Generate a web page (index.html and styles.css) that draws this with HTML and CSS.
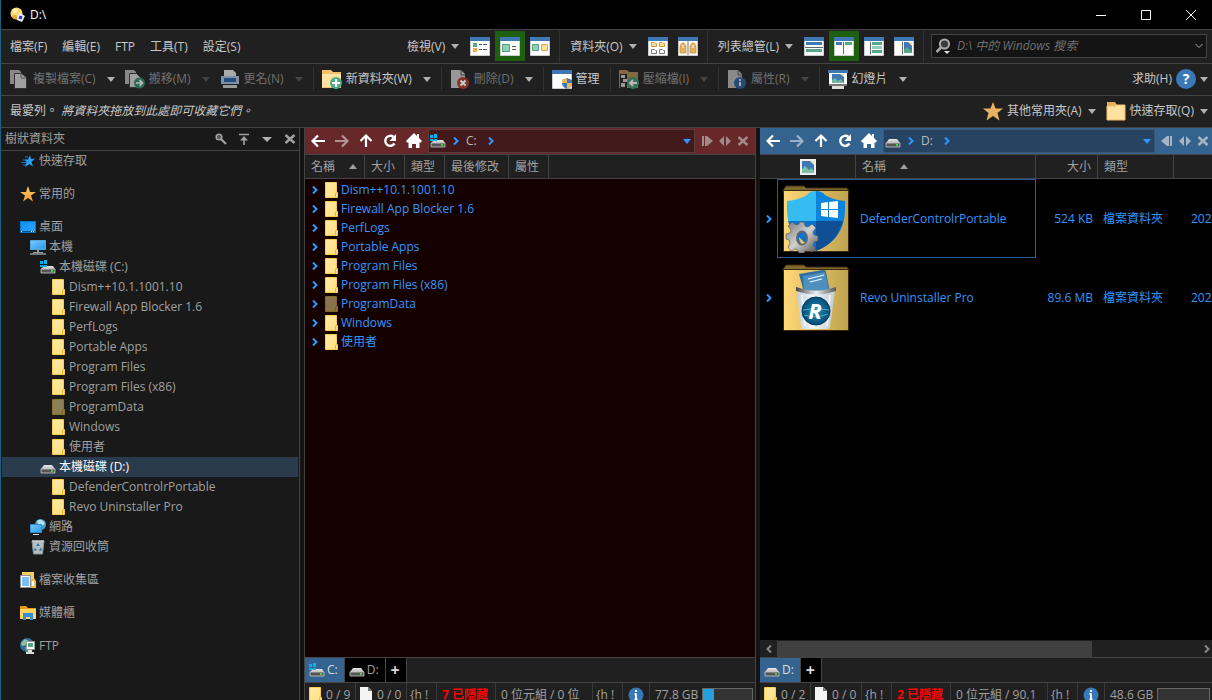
FILE: index.html
```html
<!DOCTYPE html>
<html lang="zh-Hant">
<head>
    <meta charset="UTF-8">
    <meta name="viewport" content="width=device-width, initial-scale=1.0">
    <title>D:\</title>
    <link rel="stylesheet" href="styles.css">
</head>
<body>
<!-- Icon library -->
<svg class="sprite" aria-hidden="true">
    <defs>
        <linearGradient id="g-folder" x1="0" y1="0" x2="1" y2="1"><stop offset="0" stop-color="#ffe9a6"/><stop offset="1" stop-color="#ffdf7c"/></linearGradient>
        <linearGradient id="g-thumb" x1="0" y1="0" x2="1" y2="0"><stop offset="0" stop-color="#ffd877"/><stop offset="1" stop-color="#bfa350"/></linearGradient>
        <linearGradient id="g-screen" x1="0" y1="0" x2="1" y2="1"><stop offset="0" stop-color="#7cc8ff"/><stop offset="1" stop-color="#259be8"/></linearGradient>
        <linearGradient id="g-desk" x1="0" y1="0" x2="1" y2="1"><stop offset="0" stop-color="#0a8cf0"/><stop offset="1" stop-color="#2ea8ff"/></linearGradient>
        <linearGradient id="g-star" x1="0" y1="0" x2="0" y2="1"><stop offset="0" stop-color="#ffd060"/><stop offset="1" stop-color="#f39a3c"/></linearGradient>
        <linearGradient id="g-drive" x1="0" y1="0" x2="0" y2="1"><stop offset="0" stop-color="#e8e8e8"/><stop offset="1" stop-color="#b8b8b8"/></linearGradient>
        <linearGradient id="g-gear" x1="0" y1="0" x2="1" y2="1"><stop offset="0" stop-color="#7a7a7a"/><stop offset=".5" stop-color="#d0d0d0"/><stop offset="1" stop-color="#4d4d4d"/></linearGradient>
        <linearGradient id="g-bin" x1="0" y1="0" x2="1" y2="0"><stop offset="0" stop-color="#bccddb"/><stop offset=".4" stop-color="#f2f6f9"/><stop offset="1" stop-color="#c3ccd3"/></linearGradient>
        <linearGradient id="g-rim" x1="0" y1="0" x2="1" y2="0"><stop offset="0" stop-color="#444"/><stop offset=".5" stop-color="#eee"/><stop offset="1" stop-color="#555"/></linearGradient>
        <radialGradient id="g-revo"><stop offset="0" stop-color="#1f97bd"/><stop offset="1" stop-color="#064a74"/></radialGradient>

        <symbol id="i-app" viewBox="0 0 16 16"><circle cx="6.5" cy="6.5" r="6" fill="#ffd868"/><path d="M1 9a6 6 0 0 0 7 3l-2-4z" fill="#e9a53c"/><circle cx="5" cy="4" r="2.4" fill="#fff1b0"/><path d="M10 6l5 3-3 6-5-2 1-5z" fill="#e9ecff"/><path d="M9.500 8.500l3 1-1 3-3-1z" fill="#3036a0"/></symbol>
        <symbol id="i-folder" viewBox="0 0 16 16"><path d="M2.500 .5h11v10h1v5h-12z" fill="url(#g-folder)" stroke="#f5cd50"/><path d="M12.500 15v-4l1-.5" fill="none" stroke="#e8b730"/></symbol>
        <symbol id="i-folder-big" viewBox="0 0 20 20"><path d="M1 1h8l2 3h8v4H1z" fill="#e2ae59"/><path d="M1 5h8l1-1h9v15H1z" fill="#ffe2a0" stroke="#eebf6c"/></symbol>
        <symbol id="i-page" viewBox="0 0 16 16"><path d="M2 0h8l4 4v12H2z" fill="#f4f4f4"/><path d="M10 0v4h4z" fill="#777"/></symbol>
        <symbol id="i-drive" viewBox="0 0 16 16"><path d="M4 6h8l3 4H1z" fill="url(#g-drive)"/><path d="M1 10h14v4H1z" fill="#555" stroke="#ccc" stroke-width=".8"/><path d="M11 12h2" stroke="#3cff3c" stroke-width="1.500"/></symbol>
        <symbol id="i-windrive" viewBox="0 0 16 16"><path d="M4 7h9l2 3H1z" fill="url(#g-drive)"/><path d="M1 10h14v4H1z" fill="#555" stroke="#ccc" stroke-width=".8"/><path d="M11 12h2" stroke="#3cff3c" stroke-width="1.500"/><path d="M0 2h3v3H0zM4 1h3v4H4zM0 6h3v2H0zM4 6h3v2H4z" fill="#00b4f0"/></symbol>
        <symbol id="i-quick" viewBox="0 0 16 16"><path d="M10 2l1 4 4-.5-3.500 3.500 1.500 4.500L9.500 11 5 14l1.500-4.500L4.500 6.500H8z" fill="#28a0f8"/><path d="M5 4h3M3 7h3M1 9.500h5M3 12h3" stroke="#1673c4"/></symbol>
        <symbol id="i-star" viewBox="0 0 16 16"><path d="M8 0l2 6h6l-5 3.500 2 6-5-3.500-5 3.500 2-6L0 6h6z" fill="url(#g-star)"/></symbol>
        <symbol id="i-desktop" viewBox="0 0 16 16"><path d="M.5 2.500h15v11H.5z" fill="url(#g-desk)" stroke="#0878c8"/><path d="M1 12.500h14" stroke="#064f88"/><path d="M1 12.500h1M11 12.500h1M13 12.500h1" stroke="#fff"/></symbol>
        <symbol id="i-pc" viewBox="0 0 16 16"><path d="M.5 1.500h15v9H.5z" fill="url(#g-screen)" stroke="#58a9dc"/><path d="M7 11h2v2h4v1H3v-1h4z" fill="#8ba0ad"/><path d="M0 15h16" stroke="#ccd6dc"/></symbol>
        <symbol id="i-net" viewBox="0 0 16 16"><circle cx="10.500" cy="5.500" r="5.500" fill="#4a9cc4"/><path d="M7 2c3-3 7 0 8 3l-4 2-3-2z" fill="#b9e0ef"/><path d="M.5 5.500h11v8H.5z" fill="url(#g-screen)" stroke="#318fd0"/><path d="M3 15.500h6" stroke="#dce6ec"/></symbol>
        <symbol id="i-bin" viewBox="0 0 16 16"><path d="M2 2h12l-1.500 13h-9z" fill="#b9bdc0" stroke="#8b9195"/><path d="M2 2h12" stroke="#f3f3f3"/><path d="M8 4l2 3H6zM5 8.500l2 3H4zM11 8.500l1 3H8.500z" fill="#1b78bd"/></symbol>
        <symbol id="i-collect" viewBox="0 0 16 16"><path d="M2 0h12v14H2z" fill="#f8cd61"/><path d="M.5 3.500h10v12H.5z" fill="#fff" stroke="#8e9499"/><path d="M2 5h7v9H2z" fill="#7cc0f8"/><path d="M11 8l3-2 2 3v7h-5z" fill="#f3b940"/><path d="M13 9v5" stroke="#fff" stroke-width="2"/></symbol>
        <symbol id="i-library" viewBox="0 0 16 16"><path d="M0 1h6l2 2h8v11H0z" fill="#e69a12"/><path d="M0 4h16v10H0z" fill="#ffd463"/><path d="M3 15V8h10v7h-3v-3H6v3z" fill="#3590d8"/></symbol>
        <symbol id="i-ftp" viewBox="0 0 16 16"><circle cx="7" cy="7" r="7" fill="#2d6b9d"/><path d="M1 5l4-4 4 2-3 4-4 1zM5 9l3 2-1 3z" fill="#8bc29c"/><path d="M6.500 3.500h8v8h-8z" fill="#fff" stroke="#9a9a9a"/><path d="M8 5h5v4H8z" fill="#54a583"/><path d="M8 12h4v2h2v2H6v-2h2z" fill="#ddd"/></symbol>

        <symbol id="i-search" viewBox="0 0 12 12"><circle cx="4" cy="4" r="2.800" fill="#555" stroke="currentColor" stroke-width="1.600"/><path d="M6 6l5 5" stroke="currentColor" stroke-width="2.200"/></symbol>
        <symbol id="i-find" viewBox="0 0 16 16"><circle cx="9.500" cy="6" r="4.600" fill="#3c3c3c" stroke="#aaa" stroke-width="2"/><path d="M6 9.500L1.500 14" stroke="#aaa" stroke-width="2.500"/><path d="M9 13h6l-3 3z" fill="#ddd"/></symbol>
        <symbol id="i-top" viewBox="0 0 12 12"><path d="M1 1.500h10M6 12V5" stroke="currentColor" stroke-width="1.600"/><path d="M2 7.500L6 3l4 4.500z" fill="currentColor"/></symbol>
        <symbol id="i-close" viewBox="0 0 12 12"><path d="M1.500 2l9 8M10.500 2l-9 8" stroke="currentColor" stroke-width="2.500"/></symbol>
        <symbol id="i-chev" viewBox="0 0 8 8"><path d="M2 .5L5.500 4 2 7.500" fill="none" stroke="currentColor" stroke-width="2"/></symbol>
        <symbol id="i-back" viewBox="0 0 16 16"><path d="M15 8H3M8 2.500L2.500 8 8 13.500" fill="none" stroke="currentColor" stroke-width="2.200"/></symbol>
        <symbol id="i-forward" viewBox="0 0 16 16"><path d="M1 8h12M8 2.500L13.500 8 8 13.500" fill="none" stroke="currentColor" stroke-width="2.200"/></symbol>
        <symbol id="i-up" viewBox="0 0 16 16"><path d="M8 14V3M2.500 8L8 2.500 13.500 8" fill="none" stroke="currentColor" stroke-width="2.200"/></symbol>
        <symbol id="i-refresh" viewBox="0 0 16 16"><path d="M12.500 10.500A5 5 0 1 1 11.500 4" fill="none" stroke="currentColor" stroke-width="2.400"/><path d="M14 1v7H7.500z" fill="currentColor"/></symbol>
        <symbol id="i-home" viewBox="0 0 16 16"><path d="M8 0l3 3V1h2v4l3 3-1 1.500h-1.500V15H10v-4H6v4H2.500V9.500H1L0 8z" fill="currentColor"/></symbol>
        <symbol id="i-split-r" viewBox="0 0 12 12"><path d="M1 1h2v10H1zM4 1h2v10H4zM6 1l6 5-6 5z" fill="currentColor"/></symbol>
        <symbol id="i-split-l" viewBox="0 0 12 12"><path d="M11 1H9v10h2zM8 1H6v10h2zM6 1L0 6l6 5z" fill="currentColor"/></symbol>
        <symbol id="i-swap" viewBox="0 0 12 12"><path d="M5 1v10L0 6zM7 1l5 5-5 5z" fill="currentColor"/></symbol>

        <symbol id="w-frame" viewBox="0 0 20 20"><path d="M.5 1.500h19v18H.5z" fill="#fff" stroke="#ccc"/><path d="M0 1h20v4H0z" fill="#3f78b5"/></symbol>
        <symbol id="v-details" viewBox="0 0 20 20"><use href="#w-frame"/><path d="M3 7h4v4H3z" fill="#55a986"/><path d="M3 12h4v4H3z" fill="#e7b04e"/><path d="M9 8.500h3m1 0h4M9 13.500h3m1 0h4" stroke="#555"/></symbol>
        <symbol id="v-tiles" viewBox="0 0 20 20"><use href="#w-frame"/><path d="M2.500 8.500h7v7h-7z" fill="#93ceb5" stroke="#4da37f"/><path d="M12 10.500h4M12 13.500h4" stroke="#555"/></symbol>
        <symbol id="v-thumbs" viewBox="0 0 20 20"><use href="#w-frame"/><path d="M2.500 8.500h6v6h-6z" fill="#93ceb5" stroke="#4da37f"/><path d="M11.500 8.500h6v6h-6z" fill="#ffe09a" stroke="#e0a94c"/></symbol>
        <symbol id="v-folders" viewBox="0 0 20 20"><use href="#w-frame"/><path d="M3.500 6.500h3l1 1h1v3h-5zM11.500 6.500h3l1 1h1v3h-5z" fill="#ffe0a0" stroke="#d99a35"/><path d="M3.500 13.500h3l1 1h1v3h-5zM11.500 13.500h3l1 1h1v3h-5z" fill="#fff" stroke="#777"/></symbol>
        <symbol id="v-lock" viewBox="0 0 20 20"><use href="#w-frame"/><path d="M10 5v14" stroke="#777"/><path d="M2 17v-7l2-3h2l2 3v7zM12 17v-7l2-3h2l2 3v7z" fill="#e5b35f" stroke="#c78e38" stroke-width=".7"/><path d="M5 9v3M15 9v3" stroke="#fff"/></symbol>
        <symbol id="v-rows" viewBox="0 0 20 20"><use href="#w-frame"/><path d="M2 6h16v3H2z" fill="#3f78b5"/><path d="M1 11.500h18" stroke="#666"/><path d="M2 13h16v3H2z" fill="#55a986"/></symbol>
        <symbol id="v-cols" viewBox="0 0 20 20"><use href="#w-frame"/><path d="M9.500 6v12" stroke="#666"/><path d="M2 6h6v3H2z" fill="#3f78b5"/><path d="M11 6h7v3h-7z" fill="#55a986"/></symbol>
        <symbol id="v-tree" viewBox="0 0 20 20"><use href="#w-frame"/><path d="M6.500 6v12" stroke="#666"/><path d="M8 6h10v3H8zM8 14h10v3H8z" fill="#55a986"/><path d="M8 10h10v3H8z" fill="#93ceb5"/></symbol>
        <symbol id="v-preview" viewBox="0 0 20 20"><use href="#w-frame"/><path d="M8.500 6v12" stroke="#666"/><path d="M10 6h8v11h-8z" fill="#3f78b5"/><path d="M14 6h4v4z" fill="#ffe09a"/><path d="M10 17v-3l3-3 5 4v2z" fill="#55a986"/></symbol>

        <symbol id="t-copy" viewBox="0 0 20 20"><path d="M1 1h9l2 2v12H1z" fill="#888"/><path d="M5.500 4.500h7l5 4v11h-12z" fill="#a0a0a0" stroke="#333"/><path d="M12 4v5h5" fill="none" stroke="#555"/></symbol>
        <symbol id="t-move" viewBox="0 0 20 20"><path d="M0 1h9l2 2v12H0z" fill="#888"/><path d="M4.500 4.500h7l4 4v10h-11z" fill="#a0a0a0" stroke="#333"/><circle cx="14.500" cy="14" r="5.500" fill="#2f6b54"/><path d="M11 14h6M14.500 11l3 3-3 3" fill="none" stroke="#bbb" stroke-width="1.600"/></symbol>
        <symbol id="t-rename" viewBox="0 0 20 20"><path d="M4 1h9l3 3v4H4z" fill="#aaa"/><path d="M1 7h18v8H1z" fill="#7d90a5"/><path d="M4 9h12v4H4z" fill="#224d7d"/><path d="M3 16h14v3H3z" fill="#999"/></symbol>
        <symbol id="t-new" viewBox="0 0 20 20"><path d="M0 1h9l2 2h8v16H0z" fill="#f3c16c"/><path d="M0 5h19v13H0z" fill="#ffe2a4"/><circle cx="14" cy="14" r="6" fill="#4cac86"/><path d="M14 10v8M10 14h8" stroke="#fff" stroke-width="2"/></symbol>
        <symbol id="t-delete" viewBox="0 0 20 20"><path d="M1 1h10l4 4v14H1z" fill="#989898"/><path d="M11 1v5h4" fill="none" stroke="#444"/><circle cx="13" cy="14" r="6" fill="#843329"/><path d="M10.500 11.500l5 5m0-5l-5 5" stroke="#ccc" stroke-width="2"/></symbol>
        <symbol id="t-admin" viewBox="0 0 20 20"><use href="#w-frame"/><path d="M15 9l5 2v3q0 4-5 6-5-2-5-6v-3z" fill="#3f78b5"/><path d="M15 9v5h-5v-3zM15 14h5q0 4-5 6z" fill="#e9b65e"/></symbol>
        <symbol id="t-archive" viewBox="0 0 20 20"><path d="M0 1h8l2 2h9v16H0z" fill="#806a42"/><path d="M1 5h7v14H1z" fill="#1f1f1f"/><path d="M2 6h4v3H2zM4 10h4v3H4zM2 14h4v4H2z" fill="#999"/><circle cx="14" cy="14" r="6" fill="#367258"/><path d="M18 14h-7M14 11l-3 3 3 3" fill="none" stroke="#bbb" stroke-width="1.800"/></symbol>
        <symbol id="t-props" viewBox="0 0 20 20"><path d="M1 1h10l4 4v14H1z" fill="#8a8a8a"/><path d="M11 1v5h4" fill="none" stroke="#444"/><circle cx="13" cy="14" r="6" fill="#264b74"/><path d="M13 10v2M13 13v4" stroke="#aaa" stroke-width="2"/></symbol>
        <symbol id="t-slides" viewBox="0 0 20 20"><path d="M0 1h20v3H0z" fill="#3f78b5"/><path d="M1 4h18v11H1z" fill="#fff"/><path d="M4 5h12v9H4z" fill="#3f78b5"/><path d="M12 5h4v3z" fill="#ffe09a"/><path d="M4 14v-3l3-2 3 3 3-2 3 4z" fill="#72b99c"/><path d="M1 15h18v2H1z" fill="#777"/><path d="M4 17h12v3H4z" fill="#ddd"/></symbol>
        <symbol id="t-image" viewBox="0 0 16 16"><path d="M1 1h14v14H1z" fill="#3f78b5" stroke="#eee" stroke-width="2"/><path d="M10 2h4v4z" fill="#ffe09a"/><path d="M2 14v-4l3-3 4 4 2-2 3 3v2z" fill="#80c1a5"/></symbol>
        <symbol id="t-star" viewBox="0 0 20 20"><path d="M10 1l2.600 6.500H20l-5.500 4.500 2 7.500L10 15l-6.500 4.500 2-7.500L0 7.500h7.400z" fill="#e9b261"/></symbol>
        <symbol id="t-info" viewBox="0 0 16 16"><circle cx="8" cy="8" r="7.500" fill="#3878b8"/><path d="M8 3v2M8 6.500v6M6.500 12.500h3M6.500 7H8" stroke="#fff" stroke-width="1.800"/></symbol>
    </defs>
</svg>

<div class="app">
    <header class="titlebar">
        <svg class="ic16"><use href="#i-app"/></svg>
        <h1>D:\</h1>
        <div class="window-buttons">
            <button aria-label="最小化"><svg viewBox="0 0 12 12"><path d="M1 6.500h10"/></svg></button>
            <button aria-label="最大化"><svg viewBox="0 0 12 12"><path d="M1.500 1.500h9v9h-9z"/></svg></button>
            <button aria-label="關閉"><svg viewBox="0 0 12 12"><path d="M1 1l10 10M11 1L1 11"/></svg></button>
        </div>
    </header>

    <div class="bar menubar">
        <nav class="menus">
            <button>檔案(F)</button>
            <button>編輯(E)</button>
            <button>FTP</button>
            <button>工具(T)</button>
            <button>設定(S)</button>
        </nav>
        <div class="group">
            <button class="drop">檢視(V)<i class="caret"></i></button>
            <button class="view" aria-label="詳細資料"><svg class="ic20"><use href="#v-details"/></svg></button>
            <button class="view on" aria-label="並排"><svg class="ic20"><use href="#v-tiles"/></svg></button>
            <button class="view" aria-label="縮圖"><svg class="ic20"><use href="#v-thumbs"/></svg></button>
        </div>
        <div class="group">
            <button class="drop">資料夾(O)<i class="caret"></i></button>
            <button class="view" aria-label="資料夾格式"><svg class="ic20"><use href="#v-folders"/></svg></button>
            <button class="view" aria-label="格式鎖定"><svg class="ic20"><use href="#v-lock"/></svg></button>
        </div>
        <div class="group">
            <button class="drop">列表總管(L)<i class="caret"></i></button>
            <button class="view" aria-label="上下雙欄"><svg class="ic20"><use href="#v-rows"/></svg></button>
            <button class="view on" aria-label="左右雙欄"><svg class="ic20"><use href="#v-cols"/></svg></button>
            <button class="view" aria-label="樹狀"><svg class="ic20"><use href="#v-tree"/></svg></button>
            <button class="view" aria-label="預覽"><svg class="ic20"><use href="#v-preview"/></svg></button>
        </div>
        <div class="search">
            <svg class="ic16"><use href="#i-find"/></svg>
            <input type="text" aria-label="搜索" placeholder="D:\ 中的 Windows 搜索">
            <button aria-label="搜索選項"><svg viewBox="0 0 8 8"><path d="M.5 2L4 5.500 7.500 2"/></svg></button>
        </div>
    </div>

    <div class="bar toolbar">
        <div class="tools">
            <button class="tool" disabled><svg class="ic20"><use href="#t-copy"/></svg>複製檔案(C)<i class="caret lit"></i></button>
            <button class="tool" disabled><svg class="ic20"><use href="#t-move"/></svg>搬移(M)<i class="caret"></i></button>
            <button class="tool" disabled><svg class="ic20"><use href="#t-rename"/></svg>更名(N)<i class="caret"></i></button>
            <button class="tool split"><svg class="ic20"><use href="#t-new"/></svg>新資料夾(W)<i class="caret"></i></button>
            <button class="tool split" disabled><svg class="ic20"><use href="#t-delete"/></svg>刪除(D)<i class="caret lit"></i></button>
            <button class="tool split"><svg class="ic20"><use href="#t-admin"/></svg>管理</button>
            <button class="tool split" disabled><svg class="ic20"><use href="#t-archive"/></svg>壓縮檔(I)<i class="caret"></i></button>
            <button class="tool split" disabled><svg class="ic20"><use href="#t-props"/></svg>屬性(R)<i class="caret"></i></button>
            <button class="tool split"><svg class="ic20"><use href="#t-slides"/></svg>幻燈片<i class="caret"></i></button>
        </div>
        <button class="help">求助(H)<span class="question">?</span><i class="caret"></i></button>
    </div>

    <div class="bar favbar">
        <p>最愛列。 <em>將資料夾拖放到此處即可收藏它們。</em></p>
        <button class="fav"><svg class="ic20"><use href="#t-star"/></svg>其他常用夾(A)<i class="caret"></i></button>
        <button class="fav"><svg class="ic20"><use href="#i-folder-big"/></svg>快速存取(Q)<i class="caret"></i></button>
    </div>

    <main class="panes">
        <aside class="tree">
            <div class="tree-head">
                <h2>樹狀資料夾</h2>
                <button aria-label="尋找"><svg class="ic12"><use href="#i-search"/></svg></button>
                <button aria-label="到頂端"><svg class="ic12"><use href="#i-top"/></svg></button>
                <button aria-label="選單"><i class="caret big"></i></button>
                <button aria-label="關閉樹狀"><svg class="ic12"><use href="#i-close"/></svg></button>
            </div>
            <ul>
                <li><a href="#"><svg class="ic16"><use href="#i-quick"/></svg>快速存取</a></li>
                <li class="root"><a href="#"><svg class="ic16"><use href="#i-star"/></svg>常用的</a></li>
                <li class="root"><a href="#"><svg class="ic16"><use href="#i-desktop"/></svg>桌面</a></li>
                <li><a class="l1" href="#"><svg class="ic16"><use href="#i-pc"/></svg>本機</a></li>
                <li><a class="l2" href="#"><svg class="ic16"><use href="#i-windrive"/></svg>本機磁碟 (C:)</a></li>
                <li><a class="l3" href="#"><svg class="ic16"><use href="#i-folder"/></svg>Dism++10.1.1001.10</a></li>
                <li><a class="l3" href="#"><svg class="ic16"><use href="#i-folder"/></svg>Firewall App Blocker 1.6</a></li>
                <li><a class="l3" href="#"><svg class="ic16"><use href="#i-folder"/></svg>PerfLogs</a></li>
                <li><a class="l3" href="#"><svg class="ic16"><use href="#i-folder"/></svg>Portable Apps</a></li>
                <li><a class="l3" href="#"><svg class="ic16"><use href="#i-folder"/></svg>Program Files</a></li>
                <li><a class="l3" href="#"><svg class="ic16"><use href="#i-folder"/></svg>Program Files (x86)</a></li>
                <li><a class="l3" href="#"><svg class="ic16 hidden-item"><use href="#i-folder"/></svg>ProgramData</a></li>
                <li><a class="l3" href="#"><svg class="ic16"><use href="#i-folder"/></svg>Windows</a></li>
                <li><a class="l3" href="#"><svg class="ic16"><use href="#i-folder"/></svg>使用者</a></li>
                <li><a class="l2 selected" href="#"><svg class="ic16"><use href="#i-drive"/></svg>本機磁碟 (D:)</a></li>
                <li><a class="l3" href="#"><svg class="ic16"><use href="#i-folder"/></svg>DefenderControlrPortable</a></li>
                <li><a class="l3" href="#"><svg class="ic16"><use href="#i-folder"/></svg>Revo Uninstaller Pro</a></li>
                <li><a class="l1" href="#"><svg class="ic16"><use href="#i-net"/></svg>網路</a></li>
                <li><a class="l1" href="#"><svg class="ic16"><use href="#i-bin"/></svg>資源回收筒</a></li>
                <li class="root"><a href="#"><svg class="ic16"><use href="#i-collect"/></svg>檔案收集區</a></li>
                <li class="root"><a href="#"><svg class="ic16"><use href="#i-library"/></svg>媒體櫃</a></li>
                <li class="root"><a href="#"><svg class="ic16"><use href="#i-ftp"/></svg>FTP</a></li>
            </ul>
        </aside>

        <section class="lister left">
            <div class="nav">
                <button aria-label="上一頁"><svg class="ic16"><use href="#i-back"/></svg></button>
                <button class="off" aria-label="下一頁"><svg class="ic16"><use href="#i-forward"/></svg></button>
                <button aria-label="上層"><svg class="ic16"><use href="#i-up"/></svg></button>
                <button aria-label="重新整理"><svg class="ic16"><use href="#i-refresh"/></svg></button>
                <button aria-label="首頁"><svg class="ic16"><use href="#i-home"/></svg></button>
                <div class="address">
                    <svg class="ic16"><use href="#i-windrive"/></svg>
                    <svg class="chev"><use href="#i-chev"/></svg>
                    <a href="#">C:</a>
                    <svg class="chev"><use href="#i-chev"/></svg>
                    <button aria-label="路徑記錄"><i class="caret"></i></button>
                </div>
                <div class="nav-end">
                    <button aria-label="分割"><svg class="ic12"><use href="#i-split-r"/></svg></button>
                    <button aria-label="交換"><svg class="ic12"><use href="#i-swap"/></svg></button>
                    <button aria-label="關閉列表"><svg class="ic12"><use href="#i-close"/></svg></button>
                </div>
            </div>
            <div class="files">
                <table class="list">
                    <colgroup><col class="c-name"><col class="c-40"><col class="c-40"><col class="c-mod"><col class="c-40"><col></colgroup>
                    <thead>
                    <tr><th>名稱<i class="sort"></i></th><th>大小</th><th>類型</th><th>最後修改</th><th>屬性</th><th></th></tr>
                    </thead>
                    <tbody>
                    <tr><td colspan="6"><div class="file"><svg class="chev"><use href="#i-chev"/></svg><svg class="ic16"><use href="#i-folder"/></svg>Dism++10.1.1001.10</div></td></tr>
                    <tr><td colspan="6"><div class="file"><svg class="chev"><use href="#i-chev"/></svg><svg class="ic16"><use href="#i-folder"/></svg>Firewall App Blocker 1.6</div></td></tr>
                    <tr><td colspan="6"><div class="file"><svg class="chev"><use href="#i-chev"/></svg><svg class="ic16"><use href="#i-folder"/></svg>PerfLogs</div></td></tr>
                    <tr><td colspan="6"><div class="file"><svg class="chev"><use href="#i-chev"/></svg><svg class="ic16"><use href="#i-folder"/></svg>Portable Apps</div></td></tr>
                    <tr><td colspan="6"><div class="file"><svg class="chev"><use href="#i-chev"/></svg><svg class="ic16"><use href="#i-folder"/></svg>Program Files</div></td></tr>
                    <tr><td colspan="6"><div class="file"><svg class="chev"><use href="#i-chev"/></svg><svg class="ic16"><use href="#i-folder"/></svg>Program Files (x86)</div></td></tr>
                    <tr><td colspan="6"><div class="file"><svg class="chev"><use href="#i-chev"/></svg><svg class="ic16 hidden-item"><use href="#i-folder"/></svg>ProgramData</div></td></tr>
                    <tr><td colspan="6"><div class="file"><svg class="chev"><use href="#i-chev"/></svg><svg class="ic16"><use href="#i-folder"/></svg>Windows</div></td></tr>
                    <tr><td colspan="6"><div class="file"><svg class="chev"><use href="#i-chev"/></svg><svg class="ic16"><use href="#i-folder"/></svg>使用者</div></td></tr>
                    </tbody>
                </table>
            </div>
            <div class="tabs">
                <button class="tab active"><svg class="ic16"><use href="#i-windrive"/></svg>C:</button>
                <button class="tab"><svg class="ic16"><use href="#i-drive"/></svg>D:</button>
                <button class="tab add" aria-label="新增分頁">+</button>
            </div>
            <div class="status">
                <span class="st-count"><svg class="ic16"><use href="#i-folder"/></svg>0 / 9</span>
                <span class="st-count"><svg class="ic16"><use href="#i-page"/></svg>0 / 0</span>
                <span class="st-code">{h !</span>
                <span class="st-hidden">7 已隱藏</span>
                <span class="st-bytes">0 位元組 / 0 位</span>
                <span class="st-code">{h !</span>
                <span class="st-info"><svg class="ic16"><use href="#t-info"/></svg></span>
                <span class="st-disk">77.8 GB<span class="meter"><span style="width: 22%"></span></span></span>
            </div>
        </section>

        <section class="lister right">
            <div class="nav">
                <button aria-label="上一頁"><svg class="ic16"><use href="#i-back"/></svg></button>
                <button class="off" aria-label="下一頁"><svg class="ic16"><use href="#i-forward"/></svg></button>
                <button aria-label="上層"><svg class="ic16"><use href="#i-up"/></svg></button>
                <button aria-label="重新整理"><svg class="ic16"><use href="#i-refresh"/></svg></button>
                <button aria-label="首頁"><svg class="ic16"><use href="#i-home"/></svg></button>
                <div class="address">
                    <svg class="ic16"><use href="#i-drive"/></svg>
                    <svg class="chev"><use href="#i-chev"/></svg>
                    <a href="#">D:</a>
                    <svg class="chev"><use href="#i-chev"/></svg>
                    <button aria-label="路徑記錄"><i class="caret"></i></button>
                </div>
                <div class="nav-end">
                    <button aria-label="分割"><svg class="ic12"><use href="#i-split-l"/></svg></button>
                    <button aria-label="交換"><svg class="ic12"><use href="#i-swap"/></svg></button>
                    <button aria-label="關閉列表"><svg class="ic12"><use href="#i-close"/></svg></button>
                </div>
            </div>
            <div class="files">
                <table class="thumbs">
                    <colgroup><col class="c-exp"><col class="c-thumb"><col class="c-title"><col class="c-size"><col class="c-type"><col></colgroup>
                    <thead>
                    <tr><th colspan="2" class="mid"><svg class="ic16"><use href="#t-image"/></svg></th><th>名稱<i class="sort"></i></th><th class="num">大小</th><th>類型</th><th></th></tr>
                    </thead>
                    <tbody>
                    <tr class="focused">
                        <td class="exp"><svg class="chev"><use href="#i-chev"/></svg></td>
                        <td class="thumb">
                            <svg viewBox="0 0 68 68">
                                <path d="M2 4l2-3h18l2 2h41l2 3v2H1V5z" fill="#80692f" stroke="#3c2d10"/>
                                <path d="M1.500 5.500h65v61h-65z" fill="url(#g-thumb)" stroke="#3a2a0c"/>
                                <path d="M34 6q6 0 9 4 8 5 20 6v10q-1 29-29 40z" fill="#0a84dc"/>
                                <path d="M34 6q-6 0-9 4-8 5-20 6v10q1 29 29 40z" fill="#35bcf0"/>
                                <path d="M34 36h27q-6 22-27 30z" fill="#104f94"/>
                                <path d="M34 36H6q6 22 28 30z" fill="#0874d0"/>
                                <path d="M39 18l7-1v7h-7zM47 17l9-1v8h-9zM39 25h7v7l-7-1zM47 25h9v8l-9-1z" fill="#fff"/>
                                <path d="M17 37h5l1 4 3 1 4-3 4 4-3 4 1 3 4 1v5l-4 1-1 3 3 4-4 3-4-2-3 1-1 2h-5l-1-3-3-1-4 2-3-4 2-4-1-3-3-1v-5l4-1 1-3-3-4 4-4 4 3 3-1z" fill="url(#g-gear)" stroke="#555" stroke-width=".6"/>
                                <ellipse cx="20" cy="53" rx="5" ry="6.500" fill="#0874d0" stroke="#666" stroke-width="2"/>
                                <path d="M17 52q0 5 3 7l3-1z" fill="#e9c565"/>
                            </svg>
                        </td>
                        <td class="title">DefenderControlrPortable</td>
                        <td class="num">524 KB</td>
                        <td>檔案資料夾</td>
                        <td class="date">202</td>
                    </tr>
                    <tr>
                        <td class="exp"><svg class="chev"><use href="#i-chev"/></svg></td>
                        <td class="thumb">
                            <svg viewBox="0 0 68 68">
                                <path d="M2 4l2-3h18l2 2h41l2 3v2H1V5z" fill="#80692f" stroke="#3c2d10"/>
                                <path d="M1.500 5.500h65v61h-65z" fill="url(#g-thumb)" stroke="#3a2a0c"/>
                                <path d="M17 10l24-4q3 0 3 2l4 20H22z" fill="#2f6f9f"/>
                                <path d="M21 12l22-4 4 18H22z" fill="#4f8fbf"/>
                                <path d="M26 15l16-4M28 18l12-3" stroke="#eef6fb" stroke-width="1.200"/>
                                <path d="M15 27h38l-5 35q0 3-3 3H22q-3 0-3-3z" fill="url(#g-bin)"/>
                                <path d="M20 31l3 31M48 31l-3 31" stroke="#fff" stroke-width="2" opacity=".7"/>
                                <path d="M14 23q20 7 40 0v4q-20 7-40 0z" fill="url(#g-rim)"/>
                                <circle cx="34" cy="47" r="14" fill="url(#g-revo)" stroke="#083d5e"/>
                                <path d="M21 46q12-3 26 0M22 51q12 4 24-1" fill="none" stroke="#53abc9"/>
                                <text x="33" y="55" class="revo-r">R</text>
                            </svg>
                        </td>
                        <td class="title">Revo Uninstaller Pro</td>
                        <td class="num">89.6 MB</td>
                        <td>檔案資料夾</td>
                        <td class="date">202</td>
                    </tr>
                    </tbody>
                </table>
            </div>
            <div class="hscroll">
                <button aria-label="向左捲動"><svg class="chev flip"><use href="#i-chev"/></svg></button>
                <div class="track"><div class="knob"></div></div>
                <button aria-label="向右捲動"><svg class="chev"><use href="#i-chev"/></svg></button>
            </div>
            <div class="tabs">
                <button class="tab active"><svg class="ic16"><use href="#i-drive"/></svg>D:</button>
                <button class="tab add" aria-label="新增分頁">+</button>
            </div>
            <div class="status">
                <span class="st-count"><svg class="ic16"><use href="#i-folder"/></svg>0 / 2</span>
                <span class="st-count"><svg class="ic16"><use href="#i-page"/></svg>0 / 0</span>
                <span class="st-code">{h !</span>
                <span class="st-hidden">2 已隱藏</span>
                <span class="st-bytes">0 位元組 / 90.1</span>
                <span class="st-code">{h !</span>
                <span class="st-info"><svg class="ic16"><use href="#t-info"/></svg></span>
                <span class="st-disk">48.6 GB<span class="meter"></span></span>
            </div>
        </section>
    </main>
</div>
</body>
</html>
```
FILE: styles.css
```css
* {
    box-sizing: border-box;
}

body {
    margin: 0;
    background: #202020;
    color: #c8c8c8;
    font: 12px/16px "Open Sans", "Noto Sans CJK TC", sans-serif;
    overflow: hidden;
}

h1, h2, p, ul {
    margin: 0;
    padding: 0;
    font-size: 12px;
    font-weight: normal;
}

button {
    display: flex;
    align-items: center;
    padding: 0;
    border: 0;
    background: none;
    color: inherit;
    font: inherit;
    white-space: nowrap;
}

a {
    color: inherit;
    text-decoration: none;
}

svg {
    display: block;
    flex: none;
}

.sprite {
    position: absolute;
    width: 0;
    height: 0;
}

.ic12 { width: 12px; height: 12px; }
.ic16 { width: 16px; height: 16px; }
.ic20 { width: 20px; height: 20px; }

.chev {
    width: 8px;
    height: 8px;
    color: #3296ff;
}

.flip {
    transform: scaleX(-1);
}

.caret {
    flex: none;
    border: 4px solid transparent;
    border-top: 5px solid #b0b0b0;
    border-bottom: 0;
}

.caret.big {
    border-width: 5px 5px 0;
}

.app {
    display: flex;
    flex-direction: column;
    height: 100vh;
    border-left: 1px solid #1d5f80;
}

/* Title bar */
.titlebar {
    display: flex;
    align-items: center;
    height: 29px;
    padding-left: 9px;
    background: #000;
    color: #fff;
}

.titlebar h1 {
    margin-left: 4px;
}

.window-buttons {
    display: flex;
    gap: 3px;
    margin-left: auto;
}

.window-buttons button {
    justify-content: center;
    width: 42px;
    height: 28px;
}

.window-buttons svg {
    width: 12px;
    height: 12px;
    fill: none;
    stroke: #fff;
}

/* Bars */
.bar {
    display: flex;
    align-items: center;
    flex: none;
    border-top: 1px solid #444;
}

.menubar {
    height: 34px;
    padding-right: 5px;
}

.menus {
    display: flex;
    gap: 15px;
    flex: 0 0 396px;
    padding-left: 9px;
}

.group {
    display: flex;
    align-items: center;
    padding: 0 4px 0 10px;
    border-right: 1px solid #333;
}

.drop {
    gap: 6px;
    margin-right: 6px;
}

.view {
    justify-content: center;
    width: 30px;
    height: 30px;
    margin-bottom: 2px;
}

.view.on {
    background: #1f6010;
}

.search {
    display: flex;
    align-items: center;
    flex: 1;
    min-width: 0;
    height: 24px;
    margin: 0 0 2px 7px;
    padding: 0 3px;
    border: 1px solid #444;
    background: #141414;
}

.search input {
    flex: 1;
    min-width: 0;
    margin-left: 6px;
    padding: 0;
    border: 0;
    outline: 0;
    background: none;
    color: #c8c8c8;
    font: inherit;
}

.search input::placeholder {
    color: #707070;
    font-style: italic;
}

.search button svg {
    width: 8px;
    height: 8px;
    fill: none;
    stroke: #aaa;
}

.toolbar {
    justify-content: space-between;
    height: 32px;
    padding: 0 4px 1px 8px;
}

.tools {
    display: flex;
}

.tool {
    gap: 4px;
    height: 24px;
    padding-right: 10px;
}

.tool .caret {
    margin-left: 7px;
}

.tool.split {
    padding-left: 8px;
    border-left: 1px solid #333;
}

.tool:disabled {
    color: #707070;
}

.tool:disabled .caret {
    border-top-color: #444;
}

.tool:disabled .caret.lit {
    border-top-color: #b0b0b0;
}

.help {
    gap: 4px;
}

.question {
    width: 20px;
    height: 20px;
    border-radius: 50%;
    background: #3a78b8;
    color: #fff;
    font-size: 14px;
    font-weight: bold;
    line-height: 20px;
    text-align: center;
}

.favbar {
    height: 32px;
    padding: 0 4px 1px 9px;
}

.favbar p {
    margin-right: auto;
}

.fav {
    gap: 4px;
    margin-left: 10px;
}

.fav .caret {
    margin-left: 2px;
}

/* Panes */
.panes {
    display: grid;
    grid-template-columns: 299px minmax(0, 1fr) minmax(0, 1fr);
    column-gap: 4px;
    flex: 1;
    min-height: 0;
    border-top: 1px solid #444;
    background: #141414;
}

.tree {
    border-right: 1px solid #444;
    background: #191919;
    color: #a0a0a0;
}

.tree-head {
    display: flex;
    align-items: center;
    height: 23px;
    padding: 0 3px 0 4px;
    border-bottom: 1px solid #444;
}

.tree-head h2 {
    margin-right: auto;
}

.tree-head button {
    justify-content: center;
    width: 12px;
    margin-left: 11px;
}

.tree ul {
    list-style: none;
}

.tree a {
    display: flex;
    align-items: center;
    gap: 3px;
    height: 20px;
    margin: 0 1px;
    padding-left: 18px;
}

.tree .root {
    margin-top: 13px;
}

.tree .l1 { padding-left: 28px; }
.tree .l2 { padding-left: 38px; }
.tree .l3 { padding-left: 48px; }

.tree .selected {
    background: #2a3b4d;
    color: #fff;
}

.hidden-item {
    opacity: 0.5;
}

.lister {
    display: flex;
    flex-direction: column;
    min-width: 0;
    overflow: hidden;
    background: #202020;
    color: #a0a0a0;
}

.left {
    border: solid #444;
    border-width: 0 1px;
}

.nav {
    display: flex;
    align-items: center;
    flex: none;
    height: 26px;
    padding-left: 5px;
    color: #fff;
}

.left .nav { background: #662829; }
.right .nav { background: #35638f; }

.nav > button {
    width: 24px;
}

.nav > button:last-of-type {
    width: 22px;
}

.nav .off {
    opacity: 0.5;
}

.address {
    display: flex;
    align-items: center;
    gap: 6px;
    flex: 1;
    min-width: 0;
    height: 24px;
    margin-right: 6px;
    padding: 0 3px 0 1px;
    border: 1px solid #5c3b3c;
    background: #431a1b;
    color: #bbb;
}

.right .address {
    border-color: #3c5873;
    background: #264361;
}

.address a {
    padding-right: 4px;
}

.address button {
    margin-left: auto;
}

.address .caret {
    border-top-color: #3296ff;
}

.nav-end {
    display: flex;
    gap: 6px;
    padding-right: 6px;
    color: #a5898a;
}

.right .nav-end {
    padding-right: 3px;
    color: #a5b5c6;
}

.files {
    flex: 1;
    min-height: 0;
    overflow: hidden;
    background: #150000;
}

.right .files {
    background: #000;
}

table {
    width: 100%;
    table-layout: fixed;
    border-collapse: separate;
    border-spacing: 0;
}

th {
    height: 25px;
    padding: 0 6px;
    border: solid #444;
    border-width: 1px 1px 1px 0;
    background: #202020;
    font-weight: normal;
    text-align: left;
    white-space: nowrap;
}

th:last-child {
    border-right: 0;
}

td {
    padding: 0;
    color: #3296ff;
    white-space: nowrap;
}

.sort {
    display: inline-block;
    margin-left: 14px;
    border: 4px solid transparent;
    border-top: 0;
    border-bottom: 5px solid #a0a0a0;
    vertical-align: 2px;
}

.c-name { width: 60px; }
.c-40 { width: 40px; }
.c-mod { width: 64px; }
.c-exp { width: 17px; }
.c-thumb { width: 79px; }
.c-title { width: 180px; }
.c-size { width: 62px; }
.c-type { width: 76px; }

.list tbody tr:first-child td {
    padding-top: 1px;
}

.file {
    display: flex;
    align-items: center;
    height: 19px;
    padding-left: 6px;
}

.file .ic16 {
    margin: 0 2px 0 4px;
}

.thumbs tbody tr {
    height: 79px;
}

.thumbs td {
    padding: 0 5px;
}

.thumbs .title {
    padding-left: 4px;
}

.thumbs .date {
    padding-left: 17px;
}

.num {
    text-align: right;
}

.mid .ic16 {
    margin: 0 auto;
}

.thumb svg {
    width: 68px;
    height: 68px;
}

.focused .thumb {
    border: solid #2b5c8c;
    border-width: 1px 0 1px 1px;
    padding-left: 4px;
}

.focused .title {
    border: solid #2b5c8c;
    border-width: 1px 1px 1px 0;
}

.revo-r {
    fill: #fff;
    font-size: 22px;
    font-style: italic;
    font-weight: bold;
    text-anchor: middle;
}

.hscroll {
    display: flex;
    align-items: center;
    flex: none;
    height: 17px;
    padding-right: 1px;
}

.hscroll button {
    justify-content: center;
    width: 17px;
}

.hscroll button:last-child {
    width: 8px;
}

.hscroll .chev {
    color: #888;
}

.track {
    flex: 1;
}

.knob {
    width: 74%;
    height: 16px;
    background: #404040;
}

.tabs {
    display: flex;
    flex: none;
    height: 26px;
    border: solid #444;
    border-width: 1px 0;
}

.tab {
    gap: 2px;
    padding: 0 6px 0 4px;
    border-right: 1px solid #444;
    background: #000;
}

.tab.active {
    background: #35638f;
    color: #ddd;
}

.tab.add {
    padding: 0 6px 0 5px;
    color: #ddd;
    font-size: 16px;
    font-weight: bold;
}

/* Status bar, its lower edge runs off the window */
.status {
    display: flex;
    align-items: flex-start;
    flex: none;
    height: 17px;
    overflow: hidden;
    white-space: nowrap;
}

.status > span {
    display: flex;
    align-items: center;
    flex: none;
    height: 24px;
    padding: 0 5px;
    border-right: 1px solid #3a3a3a;
}

.status .st-count {
    gap: 3px;
    min-width: 51px;
    padding: 0 2px;
}

.status .st-code {
    min-width: 30px;
    padding: 0 3px;
}

.status .st-hidden {
    min-width: 59px;
    color: #f00;
    font-weight: bold;
}

.status .st-bytes {
    min-width: 97px;
}

.status .st-disk {
    flex: 1;
    gap: 4px;
    border-right: 0;
    padding-right: 2px;
}

.meter {
    flex: 1;
    height: 14px;
    border: 1px solid #666;
    background: #333;
}

.meter span {
    display: block;
    height: 12px;
    background: #269fdc;
}
```
